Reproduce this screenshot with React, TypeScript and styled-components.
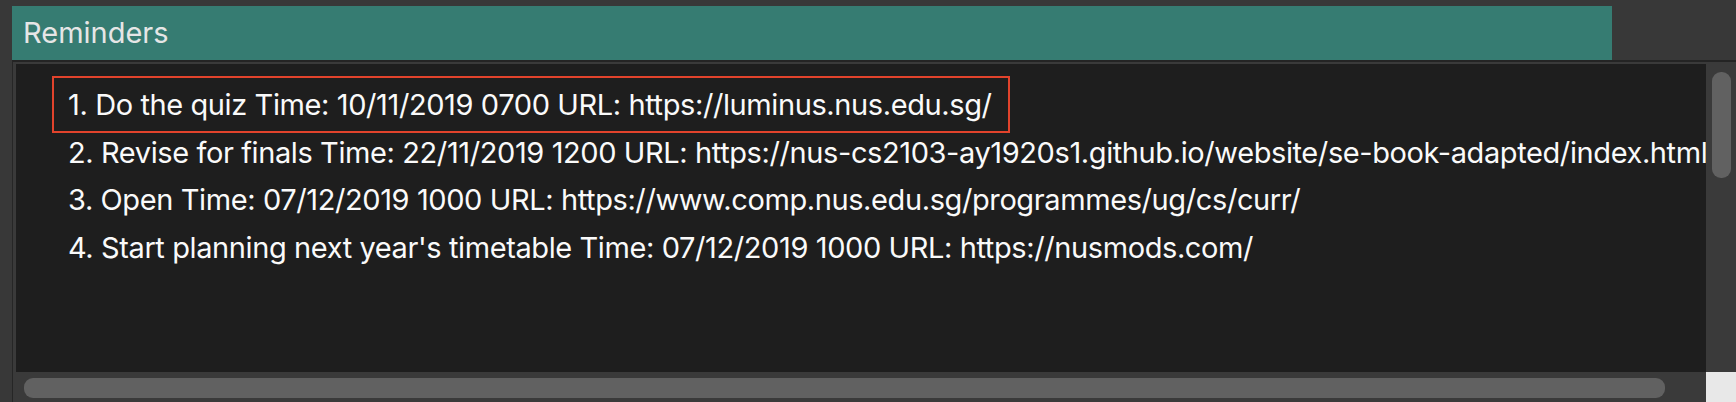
import styled, { createGlobalStyle } from 'styled-components';

const GlobalStyle = createGlobalStyle`
  html, body {
    margin: 0;
    padding: 0;
    background: #383838;
    overflow: hidden;
  }
`;

const reminders = [
  'Do the quiz Time: 10/11/2019 0700 URL: https://luminus.nus.edu.sg/',
  'Revise for finals Time: 22/11/2019 1200 URL: https://nus-cs2103-ay1920s1.github.io/website/se-book-adapted/index.html',
  'Open Time: 07/12/2019 1000 URL: https://www.comp.nus.edu.sg/programmes/ug/cs/curr/',
  "Start planning next year's timetable Time: 07/12/2019 1000 URL: https://nusmods.com/",
];

const Window = styled.div`
  width: 1736px;
  height: 402px;
  box-sizing: border-box;
  padding: 6px 0 0 12px;
  display: flex;
  flex-direction: column;
  font-family: Inter, "Noto Sans", sans-serif;
`;

const TitleBar = styled.div`
  width: 1600px;
  height: 54px;
  flex: none;
  box-sizing: border-box;
  padding-left: 11px;
  background: #367c72;
  color: #e6e6e6;
  font-size: 29px;
  line-height: 54px;
`;

const ListView = styled.div`
  flex: 1;
  min-height: 0;
  display: grid;
  grid-template-columns: 1fr 30px;
  grid-template-rows: 1fr 30px;
  background: #3a3a3a;
  border-top: 2px solid #242424;
  border-left: 1px solid #262626;
  padding: 2px 0 0 3px;
`;

const Cells = styled.div`
  background: #1e1e1e;
  overflow: hidden;
  padding: 17px 0 0 52px;
  display: flex;
  flex-direction: column;
  align-items: flex-start;
`;

const Cell = styled.div<{ $marked?: boolean }>`
  position: relative;
  white-space: nowrap;
  color: #fafafa;
  font-size: 29px;
  letter-spacing: -0.4px;
  line-height: 47.5px;
  height: 47.5px;

  &::before {
    content: '';
    display: ${(p) => (p.$marked ? 'block' : 'none')};
    position: absolute;
    top: -5px;
    bottom: -4px;
    left: -16px;
    right: -18px;
    border: 2px solid #e2432c;
  }
`;

const VTrack = styled.div`
  background: #3a3a3a;
  padding: 8px 5px 0 6px;
`;

const VThumb = styled.div`
  height: 106px;
  border-radius: 9px;
  background: #616161;
`;

const HTrack = styled.div`
  background: #3a3a3a;
  padding: 6px 41px 4px 8px;
`;

const HThumb = styled.div`
  height: 20px;
  border-radius: 9px;
  background: #616161;
`;

const Corner = styled.div`
  background: #e8e8e8;
`;

export default function App() {
  return (
    <>
      <GlobalStyle />
      <Window>
        <TitleBar>Reminders</TitleBar>
        <ListView>
          <Cells>
            {reminders.map((r, i) => (
              <Cell key={i} $marked={i === 0}>
                {i + 1}. {r}
              </Cell>
            ))}
          </Cells>
          <VTrack>
            <VThumb />
          </VTrack>
          <HTrack>
            <HThumb />
          </HTrack>
          <Corner />
        </ListView>
      </Window>
    </>
  );
}
